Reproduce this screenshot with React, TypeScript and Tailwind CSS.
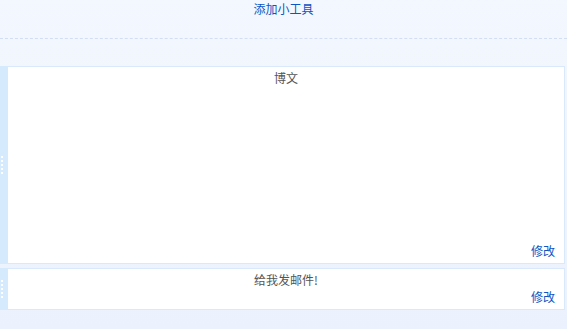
export default function App() {
  const font = { fontFamily: '"Noto Sans CJK SC", "Liberation Sans", sans-serif' }
  return (
    <div className="w-[567px] h-[329px] overflow-hidden bg-gradient-to-b from-[#f3f7fe] to-[#ecf2fd] text-[12px]" style={font}>
      <div className="h-[39px] border-b border-dashed border-[#d3def5] text-center leading-[16px] pt-[1px]">
        <a className="text-[#0b55c4]">添加小工具</a>
      </div>
      <div className="h-[27px]" />
      <div className="flex flex-col gap-[4px]">
        <Widget title="博文" height="h-[198px]" />
        <Widget title="给我发邮件!" height="h-[42px]" />
      </div>
    </div>
  )
}

function Widget({ title, height }: { title: string; height: string }) {
  return (
    <div className={`flex ${height} mr-[2px]`}>
      <div className="w-[8px] bg-[#d6eafd] flex flex-col items-start justify-center gap-[2px] pl-[1px]">
        {[0, 1, 2, 3, 4].map((i) => (
          <span key={i} className="w-[2px] h-[2px] bg-white" />
        ))}
      </div>
      <div className="flex-1 bg-white border border-l-0 border-[#d9e8fa] flex flex-col">
        <div className="text-center text-[#555] leading-[16px] pt-[3px]">{title}</div>
        <div className="mt-auto text-right pr-[9px] pb-[4px] leading-[16px]">
          <a className="text-[#0b55c4]">修改</a>
        </div>
      </div>
    </div>
  )
}
